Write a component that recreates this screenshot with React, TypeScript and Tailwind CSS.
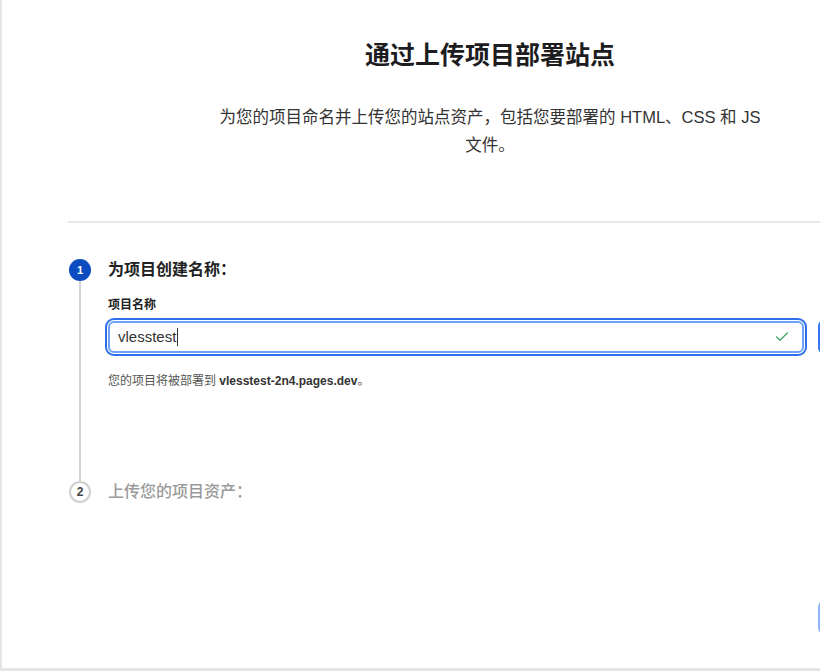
import { Check } from "lucide-react";

export default function App() {
    return (
        <div className="w-[820px] h-[671px] overflow-hidden bg-white border-l-2 border-b-[3px] border-[#e6e6e6] font-['Liberation_Sans','Noto_Sans_CJK_SC',sans-serif] text-[#222]">
            {/* Header */}
            <div className="pl-[158px] pt-[40px] text-center">
                <h1 className="text-[25px] leading-[30px] font-semibold text-[#1d1d1f]">通过上传项目部署站点</h1>
                <p className="mx-auto mt-[33px] w-[580px] text-[16.5px] leading-[28px] text-[#333]">
                    为您的项目命名并上传您的站点资产，包括您要部署的 HTML、CSS 和 JS
                    <br />
                    文件。
                </p>
            </div>

            <div className="ml-[66px] mt-[62px] h-[2px] bg-[#e8e8e8]" />

            {/* Steps */}
            <div className="pl-[67px] pt-[36px]">
                {/* Step 1 */}
                <div className="flex gap-[17px]">
                    <div className="flex w-[22px] shrink-0 flex-col items-center">
                        <div className="flex h-[22px] w-[22px] items-center justify-center rounded-full bg-[#0b4cc0] text-[11px] font-bold text-white">1</div>
                        <div className="w-[2px] flex-1 bg-[#d4d4d4]" />
                    </div>
                    <div className="flex flex-col pb-[92px]">
                        <div className="text-[16px] leading-[22px] font-semibold text-[#222]">为项目创建名称：</div>
                        <label className="mt-[16px] text-[12px] leading-[16px] font-semibold text-[#222]">项目名称</label>
                        <div className="mt-[7px] flex items-center gap-[14px]">
                            <div className="relative flex h-[32px] w-[696px] shrink-0 items-center rounded-[6px] border-2 border-[#6aa3f8] bg-white pl-[8px] pr-[12px] shadow-[0_0_0_1px_#ffffff,0_0_0_3px_#2f6fec]">
                                <span className="text-[15px] text-[#333]">vlesstest</span>
                                <span className="ml-[1px] h-[18px] w-[1px] bg-[#333]" />
                                <Check className="ml-auto text-[#3fa86a]" size={16} strokeWidth={2} />
                            </div>
                            <div className="h-[34px] w-[80px] shrink-0 rounded-[6px] border-2 border-[#3478f6] bg-white" />
                        </div>
                        <p className="mt-[19px] text-[12px] leading-[16px] text-[#555]">
                            您的项目将被部署到 <span className="font-bold text-[#333]">vlesstest-2n4.pages.dev</span>。
                        </p>
                    </div>
                </div>

                {/* Step 2 */}
                <div className="flex gap-[17px]">
                    <div className="flex w-[22px] shrink-0 flex-col items-center">
                        <div className="flex h-[22px] w-[22px] items-center justify-center rounded-full border-2 border-[#d0d0d0] bg-white text-[12px] font-bold text-[#444]">2</div>
                    </div>
                    <div className="flex flex-col">
                        <div className="text-[16px] leading-[22px] font-medium text-[#9a9a9a]">上传您的项目资产：</div>
                        <div className="mt-[98px] flex gap-[14px]">
                            <div className="w-[696px] shrink-0" />
                            <div className="h-[33px] w-[80px] shrink-0 rounded-[6px] bg-[#8fb6f7]" />
                        </div>
                    </div>
                </div>
            </div>
        </div>
    );
}
